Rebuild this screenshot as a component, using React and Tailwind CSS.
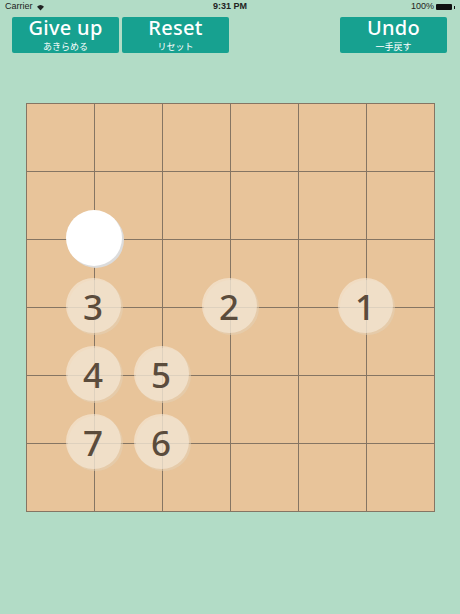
import React from "react";

const stones = [
  { x: 1, y: 2, n: null },
  { x: 1, y: 3, n: "3" },
  { x: 3, y: 3, n: "2" },
  { x: 5, y: 3, n: "1" },
  { x: 1, y: 4, n: "4" },
  { x: 2, y: 4, n: "5" },
  { x: 1, y: 5, n: "7" },
  { x: 2, y: 5, n: "6" },
];

function Btn({ en, ja }) {
  return (
    <div className="w-[107px] h-[36px] rounded-[2px] bg-[#17a190] flex flex-col items-center justify-center text-white">
      <div className="text-[20px] font-medium leading-[18px] tracking-[0.3px]" style={{ fontFamily: "'Noto Sans', 'Open Sans', sans-serif" }}>{en}</div>
      <div className="text-[9px] mt-[5px] leading-[9px]" style={{ fontFamily: "'Noto Sans CJK JP', sans-serif" }}>{ja}</div>
    </div>
  );
}

export default function App() {
  const cells = Array.from({ length: 36 });
  return (
    <div className="w-[460px] h-[614px] bg-[#b2dcc6] relative overflow-hidden" style={{ fontFamily: "'Liberation Sans', sans-serif" }}>
      <div className="h-[14px] px-[5px] flex items-center justify-between text-[9px] text-[#222]">
        <div className="flex items-center gap-[3px] w-[80px]">
          <span>Carrier</span>
          <svg width="9" height="7" viewBox="0 0 10 8">
            <path d="M5 7.5 L1 3 A6 6 0 0 1 9 3 Z" fill="#222" />
          </svg>
        </div>
        <div className="font-bold text-[9px]">9:31 PM</div>
        <div className="flex items-center justify-end gap-[2px] w-[80px]">
          <span>100%</span>
          <div className="w-[16px] h-[6px] bg-[#111] rounded-[1px]" />
          <div className="w-[1px] h-[3px] bg-[#111]" />
        </div>
      </div>
      <div className="flex px-[12px] mt-[3px]">
        <div className="flex gap-[3px]">
          <Btn en="Give up" ja="あきらめる" />
          <Btn en="Reset" ja="リセット" />
        </div>
        <div className="ml-auto mr-[1px]">
          <Btn en="Undo" ja="一手戻す" />
        </div>
      </div>
      <div className="ml-[26px] mt-[50px] w-[409px] h-[409px] relative">
        <div className="grid grid-cols-[repeat(6,68px)] grid-rows-[repeat(6,68px)] border-l border-t border-[#857563] bg-[#e8c49a] w-[409px] h-[409px]">
          {cells.map((_, i) => (
            <div key={i} className="border-r border-b border-[#857563]" />
          ))}
        </div>
        {stones.map((s, i) => (
          <div
            key={i}
            className="absolute w-[58px] h-[58px]"
            style={{ left: s.x * 68 - 28.5, top: s.y * 68 - 29 }}
          >
            {s.n === null ? (
              <>
                <div className="absolute left-[2px] top-[2px] w-[56px] h-[56px] rounded-full bg-[#dcdcdc]" />
                <div className="absolute left-0 top-0 w-[56px] h-[56px] rounded-full bg-white" />
              </>
            ) : (
              <>
                <div className="absolute left-[2px] top-[2px] w-[55px] h-[55px] rounded-full bg-[#e3d2b6]/55" />
                <div className="absolute left-0 top-0 w-[55px] h-[55px] rounded-full bg-[#f6ecdd]/60 flex items-center justify-center">
                  <span className="text-[35px] font-medium leading-none text-[#5b4c3c] mt-[2px]" style={{ fontFamily: "'Noto Sans', sans-serif" }}>{s.n}</span>
                </div>
              </>
            )}
          </div>
        ))}
      </div>
    </div>
  );
}
